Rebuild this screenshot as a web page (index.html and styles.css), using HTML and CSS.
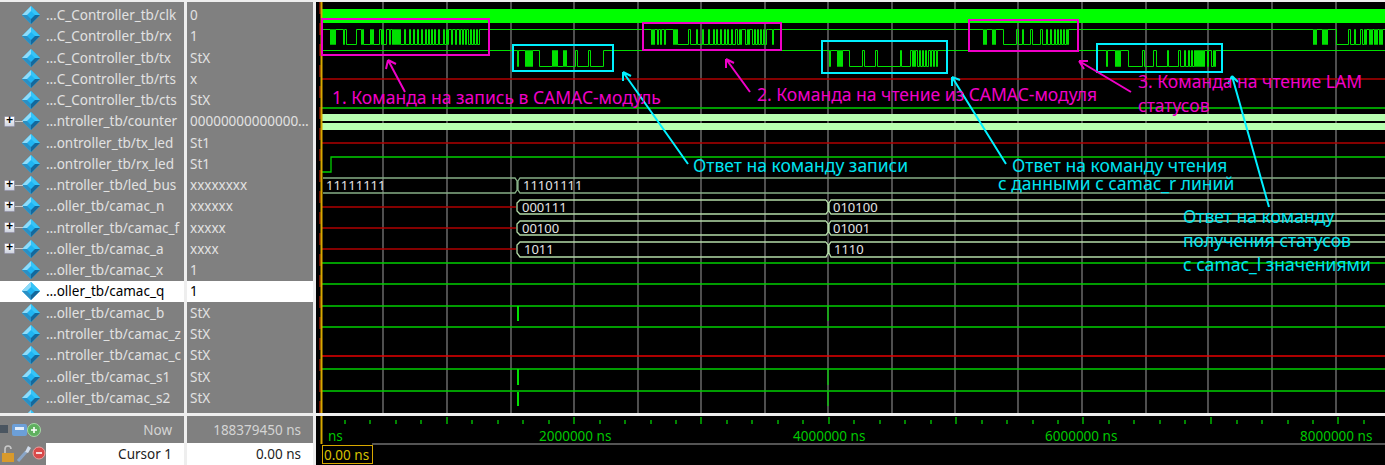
FILE: index.html
```html
<!DOCTYPE html>
<html lang="en">
<head>
    <meta charset="UTF-8">
    <title>Wave - camac controller</title>
    <link rel="stylesheet" href="styles.css">
</head>
<body>
    <svg class="defs" width="0" height="0">
        <symbol id="diamond" viewBox="0 0 18 18">
            <polygon points="9,0 18,9 9,18 0,9" fill="#1fb4f2"/>
            <polygon points="9,0 0,9 5,9 9,5" fill="#8fdcfa"/>
            <polygon points="9,0 18,9 13,9 9,5" fill="#35c4f8"/>
            <polygon points="0,9 9,18 9,13 5,9" fill="#2a8fc4"/>
            <polygon points="18,9 9,18 9,13 13,9" fill="#14689c"/>
        </symbol>
    </svg>

    <div class="app">
        <!-- signal names -->
        <div class="pane names">
            <div class="row"><svg class="dia"><use href="#diamond"/></svg><span>…C_Controller_tb/clk</span></div>
            <div class="row"><svg class="dia"><use href="#diamond"/></svg><span>…C_Controller_tb/rx</span></div>
            <div class="row"><svg class="dia"><use href="#diamond"/></svg><span>…C_Controller_tb/tx</span></div>
            <div class="row"><svg class="dia"><use href="#diamond"/></svg><span>…C_Controller_tb/rts</span></div>
            <div class="row"><svg class="dia"><use href="#diamond"/></svg><span>…C_Controller_tb/cts</span></div>
            <div class="row"><i class="plus">+</i><svg class="dia"><use href="#diamond"/></svg><span>…ntroller_tb/counter</span></div>
            <div class="row"><svg class="dia"><use href="#diamond"/></svg><span>…ontroller_tb/tx_led</span></div>
            <div class="row"><svg class="dia"><use href="#diamond"/></svg><span>…ontroller_tb/rx_led</span></div>
            <div class="row"><i class="plus">+</i><svg class="dia"><use href="#diamond"/></svg><span>…ntroller_tb/led_bus</span></div>
            <div class="row"><i class="plus">+</i><svg class="dia"><use href="#diamond"/></svg><span>…oller_tb/camac_n</span></div>
            <div class="row"><i class="plus">+</i><svg class="dia"><use href="#diamond"/></svg><span>…ntroller_tb/camac_f</span></div>
            <div class="row"><i class="plus">+</i><svg class="dia"><use href="#diamond"/></svg><span>…oller_tb/camac_a</span></div>
            <div class="row"><svg class="dia"><use href="#diamond"/></svg><span>…oller_tb/camac_x</span></div>
            <div class="row selected"><svg class="dia"><use href="#diamond"/></svg><span>…oller_tb/camac_q</span></div>
            <div class="row"><svg class="dia"><use href="#diamond"/></svg><span>…oller_tb/camac_b</span></div>
            <div class="row"><svg class="dia"><use href="#diamond"/></svg><span>…ntroller_tb/camac_z</span></div>
            <div class="row"><svg class="dia"><use href="#diamond"/></svg><span>…ntroller_tb/camac_c</span></div>
            <div class="row"><svg class="dia"><use href="#diamond"/></svg><span>…oller_tb/camac_s1</span></div>
            <div class="row"><svg class="dia"><use href="#diamond"/></svg><span>…oller_tb/camac_s2</span></div>
            <div class="row"><svg class="dia"><use href="#diamond"/></svg></div>
        </div>

        <!-- signal values -->
        <div class="pane values">
            <div class="row">0</div>
            <div class="row">1</div>
            <div class="row">StX</div>
            <div class="row">x</div>
            <div class="row">StX</div>
            <div class="row">00000000000000…</div>
            <div class="row">St1</div>
            <div class="row">St1</div>
            <div class="row">xxxxxxxx</div>
            <div class="row">xxxxxx</div>
            <div class="row">xxxxx</div>
            <div class="row">xxxx</div>
            <div class="row">1</div>
            <div class="row selected">1</div>
            <div class="row">StX</div>
            <div class="row">StX</div>
            <div class="row">StX</div>
            <div class="row">StX</div>
            <div class="row">StX</div>
        </div>

        <!-- waves -->
        <div class="wave">
            <svg class="canvas" width="1069" height="411" viewBox="316 2 1069 411">
                <path class="grid" d="M383 2V413M447 2V413M511 2V413M574 2V413M638 2V413M701 2V413M765 2V413M828 2V413M892 2V413M955 2V413M1018 2V413M1082 2V413M1146 2V413M1208 2V413M1272 2V413M1336 2V413"/>

                <rect class="clk" x="322" y="9" width="1063" height="14"/>
                <path class="sig pulse" d="M322 29H330V44H331V29H332V44H333V29H334V44H335V29H343V44H344V29H346V44H356V29H361V44H362V29H363V44H370V29H371V44H372V29H373V44H379V29H381V44H382V29H383V44H386V29H389V44H390V29H392V44H393V29H394V44H395V29H396V44H397V29H398V44H399V29H400V44H404V29H405V44H409V29H410V44H413V29H414V44H417V29H418V44H421V29H422V44H425V29H426V44H428V29H429V44H431V29H432V44H434V29H435V44H438V29H439V44H443V29H444V44H446V29H447V44H448V29H451V44H452V29H455V44H456V29H459V44H460V29H462V44H463V29H465V44H466V29H468V44H470V29H471V44H473V29H474V44H476V29H477V44H479V29H651V44H652V29H653V44H654V29H657V44H658V29H660V44H661V29H664V44H665V29H673V44H674V29H675V44H676V29H677V44H688V29H690V44H696V29H697V44H702V29H703V44H708V29H709V44H713V29H714V44H716V29H717V44H720V29H721V44H724V29H725V44H727V29H728V44H731V29H732V44H735V29H737V44H739V29H740V44H741V29H745V44H747V29H748V44H749V29H752V44H754V29H755V44H757V29H758V44H760V29H761V44H763V29H764V44H766V29H768V29H772V44H773V29H983V44H984V29H985V44H986V29H992V44H993V29H994V44H995V29H1003V44H1016V29H1018V44H1022V29H1023V44H1030V29H1032V44H1040V29H1042V44H1046V29H1047V44H1050V29H1051V44H1054V29H1055V44H1057V29H1058V44H1060V29H1061V44H1063V29H1064V44H1066V29H1067V44H1068V29H1313V44H1314V29H1315V44H1316V29H1322V44H1323V29H1324V44H1325V29H1326V44H1327V29H1336V44H1348V29H1350V44H1354V29H1355V44H1360V29H1362V44H1364V29H1365V44H1366V29H1369V44H1370V29H1371V44H1372V29H1374V44H1375V29H1376V44H1377V29H1379V44H1380V29H1381V44H1382V29H1385"/>
                <path class="sig pulse" d="M322 50H517V66H518V50H525V66H526V50H527V66H528V50H529V66H530V50H531V66H532V50H539V66H552V50H553V66H554V50H555V66H556V50H557V66H563V50H564V66H565V50H566V66H575V50H577V66H588V50H590V66H603V50H829V66H830V50H837V66H838V50H839V66H840V50H841V66H842V50H849V66H862V50H864V66H875V50H877V66H900V50H901V66H910V50H912V66H913V50H914V66H915V50H917V66H919V50H920V66H922V50H923V66H925V50H926V66H928V50H930V66H931V50H933V66H934V50H936V66H937V50H1106V66H1107V50H1115V66H1116V50H1117V66H1118V50H1119V66H1120V50H1128V66H1142V50H1144V66H1153V50H1156V66H1167V50H1168V66H1178V50H1180V66H1184V50H1185V66H1188V50H1189V66H1191V50H1192V66H1194V50H1195V66H1196V50H1197V66H1198V50H1199V66H1200V50H1201V66H1202V50H1203V66H1204V50H1207V66H1208V50H1211V66H1213V50H1214V66H1215V50H1385"/>

                <path class="red-dim" d="M322 79H1385M322 143H1385M322 207H516M322 228H516M322 249H516"/>
                <path class="sig" d="M322 108H1385M322 172H331V157H1385M322 263H1385M322 284H1385M322 306H1385M322 327H1385M322 369H1385M322 391H1385"/>
                <path class="red" d="M322 356H1385"/>

                <rect class="cnt" x="322" y="114" width="1063" height="7"/>
                <rect class="cnt" x="322" y="123" width="1063" height="7"/>

                <!-- glitches -->
                <path class="glitch" d="M518 306V321M518 369V385M518 392V406"/>
                <path class="sig" d="M828 306V321M828 369V385M828 392V406"/>

                <!-- buses -->
                <path class="bus dim" d="M323 178H515L517 181V190L515 193H323M1385 178H520L518 181V190L520 193H1385"/>
                <path class="bus" d="M1385 200H831L829 203V211L831 214H1385M826 200H520L517 203V211L520 214H826L828 211V203L826 200"/>
                <path class="bus" d="M1385 221H831L829 224V232L831 235H1385M826 221H520L517 224V232L520 235H826L828 232V224L826 221"/>
                <path class="bus" d="M1385 242H831L829 245V253L831 257H1385M826 242H520L517 245V253L520 257H826L828 253V245L826 242"/>

                <text class="val" x="326" y="190">11111111</text>
                <text class="val" x="523" y="190">11101111</text>
                <text class="val" x="522" y="212">000111</text>
                <text class="val" x="833" y="212">010100</text>
                <text class="val" x="522" y="233">00100</text>
                <text class="val" x="833" y="233">01001</text>
                <text class="val" x="524" y="254">1011</text>
                <text class="val" x="834" y="254">1110</text>

                <!-- cursor -->
                <line class="cur-red" x1="320" y1="2" x2="320" y2="413"/>
                <line class="cur" x1="321.5" y1="2" x2="321.5" y2="413"/>

                <!-- annotations -->
                <rect class="box pink" x="322" y="19" width="167" height="36"/>
                <rect class="box cyan" x="513" y="45" width="100" height="26"/>
                <rect class="box pink" x="643" y="23" width="138" height="27"/>
                <rect class="box cyan" x="822" y="41" width="125" height="32"/>
                <rect class="box pink" x="969" y="20" width="109" height="31"/>
                <rect class="box cyan" x="1097" y="44" width="125" height="28"/>

                <path class="arrow pink" d="M405 92L388 60M388 60L386 69M388 60L396 64"/>
                <path class="arrow pink" d="M750 92L726 59M726 59L726 68M726 59L734 63"/>
                <path class="arrow pink" d="M1131 92L1079 61M1079 61L1084 69M1079 61L1088 61"/>
                <path class="arrow cyan" d="M688 164L623 72M623 72L623 81M623 72L631 76"/>
                <path class="arrow cyan" d="M1006 164L952 77M952 77L952 86M952 77L960 80"/>
                <path class="arrow cyan" d="M1269 207L1232 76M1232 76L1228 84M1232 76L1238 82"/>

                <text class="note t-pink" x="332" y="104">1. Команда на запись в CAMAC-модуль</text>
                <text class="note t-pink" x="757" y="101">2. Команда на чтение из CAMAC-модуля</text>
                <text class="note t-pink" x="1138" y="88">3. Команда на чтение LAM</text>
                <text class="note t-pink" x="1138" y="112">статусов</text>
                <text class="note t-cyan" x="693" y="172">Ответ на команду записи</text>
                <text class="note t-cyan" x="1012" y="172">Ответ на команду чтения</text>
                <text class="note t-cyan" x="998" y="190">с данными с camac_r линий</text>
                <text class="note t-cyan" x="1183" y="223">Ответ на команду</text>
                <text class="note t-cyan" x="1183" y="247">получения статусов</text>
                <text class="note t-cyan" x="1183" y="271">с camac_l значениями</text>
            </svg>
        </div>

        <!-- footer: names -->
        <div class="foot">
            <div class="foot-now">
                <svg class="tools" width="46" height="20" viewBox="0 0 46 20">
                    <rect x="-3" y="5" width="11" height="8" fill="#4a5560"/>
                    <rect x="12" y="4" width="15" height="12" rx="2" fill="#6c9fd8"/>
                    <rect x="15" y="7" width="9" height="3" fill="#e4eefa"/>
                    <circle cx="34" cy="10" r="6.5" fill="#5fb05f" stroke="#a8d8a8"/>
                    <path d="M31 10H37M34 7V13" stroke="#fff" stroke-width="1.6"/>
                </svg>
                <span class="foot-label">Now</span>
            </div>
            <div class="foot-cursor">
                <svg class="tools" width="46" height="22" viewBox="0 0 46 22">
                    <rect x="2" y="10" width="12" height="9" fill="#d89a2c"/>
                    <path d="M5 10V6Q5 3 8 3Q11 3 11 6" fill="none" stroke="#c8c8c8" stroke-width="1.6"/>
                    <path d="M18 18L26 9" stroke="#8aa6c8" stroke-width="3"/>
                    <path d="M25 9L28 3L31 5L28 10Z" fill="#d0dcec"/>
                    <circle cx="39" cy="10" r="6" fill="#d84a4a" stroke="#eca0a0"/>
                    <path d="M36 10H42" stroke="#fff" stroke-width="1.6"/>
                </svg>
                <span class="foot-label white">Cursor 1</span>
            </div>
        </div>

        <!-- footer: values -->
        <div class="foot">
            <div class="foot-now"><span class="foot-value">188379450 ns</span></div>
            <div class="foot-cursor"><span class="foot-value white">0.00 ns</span></div>
        </div>

        <!-- footer: ruler -->
        <div class="ruler">
            <svg class="canvas" width="1069" height="49" viewBox="316 416 1069 49">
                <path class="tick" d="M345 420V424M370 420V424M396 420V424M421 420V424M472 420V424M498 420V424M523 420V424M549 420V424M600 420V424M625 420V424M651 420V424M676 420V424M727 420V424M752 420V424M778 420V424M803 420V424M854 420V424M880 420V424M905 420V424M931 420V424M982 420V424M1007 420V424M1033 420V424M1058 420V424M1109 420V424M1134 420V424M1160 420V424M1185 420V424M1237 420V424M1262 420V424M1288 420V424M1313 420V424M1364 420V424"/>
                <path class="tick" d="M447 417V424M574 417V424M701 417V424M829 417V424M956 417V424M1083 417V424M1211 417V424M1338 417V424"/>
                <line class="cur" x1="321.5" y1="416" x2="321.5" y2="444"/>
                <line class="rule" x1="372" y1="444" x2="1385" y2="444"/>
                <text class="tick-txt" x="328" y="441">ns</text>
                <text class="tick-txt" x="539" y="441">2000000 ns</text>
                <text class="tick-txt" x="793" y="441">4000000 ns</text>
                <text class="tick-txt" x="1045" y="441">6000000 ns</text>
                <text class="tick-txt" x="1300" y="441">8000000 ns</text>
                <rect class="cur-box" x="322.5" y="445.5" width="50" height="18"/>
                <text class="cur-txt" x="324" y="460">0.00 ns</text>
            </svg>
        </div>
    </div>
</body>
</html>
```

FILE: styles.css
```css
html, body {
    margin: 0;
    height: 100%;
    overflow: hidden;
}
body {
    font-family: "Noto Sans", "Open Sans", sans-serif;
    background-color: #eee;
}
.defs {
    position: absolute;
}
.app {
    display: grid;
    grid-template-columns: 184px 126px 1fr;
    grid-template-rows: 411px 49px;
    column-gap: 3px;
    row-gap: 3px;
    height: 465px;
    padding-top: 2px;
    box-sizing: border-box;
    background-color: #eee;
}
.pane {
    background-color: #808080;
    color: #e2e2e2;
    font-size: 13.5px;
    padding-top: 2.4px;
    overflow: hidden;
}
.row {
    display: flex;
    align-items: center;
    height: 21.28px;
    white-space: nowrap;
    position: relative;
}
.names .row {
    padding-left: 22px;
}
.values .row {
    padding-left: 3px;
}
.selected {
    background-color: #fff;
    color: #000;
}
.dia {
    width: 18px;
    height: 18px;
    margin-right: 6px;
    flex: none;
}
.plus {
    position: absolute;
    left: 4px;
    top: 5px;
    width: 11px;
    height: 11px;
    border: 1px solid #99a;
    border-radius: 1px;
    box-sizing: border-box;
    background-image: linear-gradient(#fff, #cfd4e0);
    color: #000;
    font: bold 12px/9px "Liberation Mono", monospace;
    text-align: center;
}
.plus::after {
    content: "";
    position: absolute;
    left: 10px;
    top: 4px;
    width: 8px;
    height: 1px;
    background-color: #ccc;
}
.wave, .ruler {
    background-color: #000;
    overflow: hidden;
}
.canvas {
    display: block;
}

/* wave strokes */
.grid {
    stroke: #707070;
    stroke-width: 1.4;
    fill: none;
}
.clk {
    fill: #00ff00;
}
.sig {
    stroke: #00d000;
    stroke-width: 1.3;
    fill: none;
}
.pulse {
    stroke: #00e000;
    stroke-width: 1;
    transform: translate(.5px, .5px);
}
.glitch {
    stroke: #00e000;
    stroke-width: 2;
    fill: none;
}
.red-dim {
    stroke: #b00000;
    stroke-width: 1.4;
    fill: none;
}
.red {
    stroke: #e80000;
    stroke-width: 1.4;
    fill: none;
}
.cnt {
    fill: #b8ffb0;
}
.bus {
    stroke: #b4dca8;
    stroke-width: 1.3;
    fill: none;
}
.bus.dim {
    stroke: #86ae86;
}
.val {
    fill: #e4e4e4;
    font-size: 13px;
}
.cur {
    stroke: #d8a800;
    stroke-width: 2;
}
.cur-red {
    stroke: #d02000;
    stroke-dasharray: 12 9;
}

/* annotations */
.box {
    fill: none;
    stroke-width: 2;
}
.arrow {
    fill: none;
    stroke-width: 2;
}
.box.pink, .arrow.pink {
    stroke: #f000c8;
}
.box.cyan, .arrow.cyan {
    stroke: #00f0ff;
}
.note {
    font-size: 17.5px;
}
.t-pink {
    fill: #f000c8;
}
.t-cyan {
    fill: #00e4f0;
}

/* footer */
.foot {
    display: flex;
    flex-direction: column;
    background-color: #808080;
    font-size: 13.5px;
}
.foot-now {
    display: flex;
    align-items: center;
    height: 27px;
}
.foot-cursor {
    display: flex;
    align-items: center;
    height: 22px;
}
.tools {
    flex: none;
}
.foot-label, .foot-value {
    flex: 1;
    text-align: right;
    color: #d4d4d4;
    line-height: 22px;
}
.foot-cursor .white {
    padding-top: 1px;
    line-height: 21px;
}
.foot-label {
    padding-right: 12px;
}
.foot-value {
    padding-right: 12px;
}
.white {
    background-color: #fff;
    color: #222;
}

/* ruler */
.tick {
    stroke: #00c000;
    stroke-width: 1.4;
    fill: none;
}
.rule {
    stroke: #707070;
    stroke-width: 1.4;
}
.tick-txt {
    fill: #00c800;
    font-size: 13.5px;
}
.cur-box {
    fill: none;
    stroke: #d8a800;
}
.cur-txt {
    fill: #d8c000;
    font-size: 13.5px;
}
```
